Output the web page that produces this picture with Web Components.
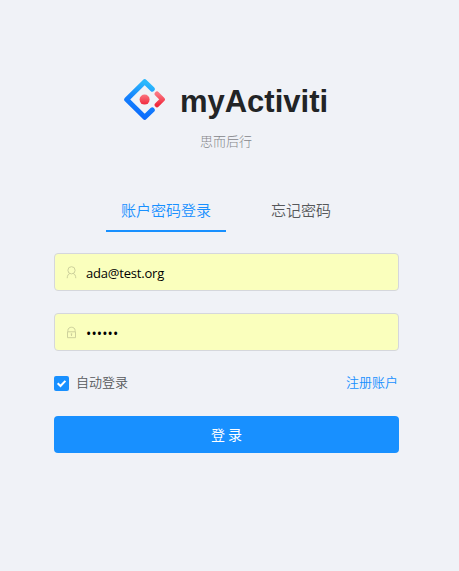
<!DOCTYPE html>
<html lang="zh-CN">
<head>
<meta charset="utf-8">
<title>myActiviti</title>
<style>
html, body { margin: 0; height: 100%; }
body { background: #f0f2f7; font-family: "Liberation Sans", "Noto Sans CJK SC", sans-serif; overflow: hidden; }
</style>
</head>
<body>
<login-page>
  <brand-header slot="header">myActiviti<span slot="desc">思而后行</span></brand-header>
  <login-tabs>
    <login-tab active>账户密码登录</login-tab>
    <login-tab>忘记密码</login-tab>
  </login-tabs>
  <login-field icon="user">ada@test.org</login-field>
  <login-field icon="lock">••••••</login-field>
  <login-options>自动登录<span slot="link">注册账户</span></login-options>
  <login-button>登 录</login-button>
</login-page>
<script>
function define(name, html, setup) {
  const template = document.createElement('template');
  template.innerHTML = html;
  customElements.define(name, class extends HTMLElement {
    constructor() {
      super();
      this.attachShadow({ mode: 'open' }).append(template.content.cloneNode(true));
    }
    connectedCallback() { if (setup) setup(this, this.shadowRoot); }
  });
}

define('login-page', `
<style>
:host { display: flex; flex-direction: column; align-items: center; box-sizing: border-box; min-height: 100%; padding: 79px 6px 0 0; }
main { width: 345px; display: flex; flex-direction: column; }
</style>
<slot name="header"></slot>
<main><slot></slot></main>`);

define('brand-header', `
<style>
:host { display: flex; flex-direction: column; align-items: center; width: 345px; color: #222426; }
.row { display: flex; align-items: center; gap: 15px; height: 41px; margin-right: 1px; }
svg { width: 41px; height: 41px; display: block; }
h1 { margin: 0; font-size: 31px; line-height: 41px; font-weight: 700; padding-top: 4px; white-space: nowrap; }
.desc { font-size: 13px; line-height: 20px; color: #85868a; margin: 12px 1px 0 0; font-weight: 300; }
</style>
<div class="row">
<svg viewBox="0 0 41 41">
  <defs>
    <linearGradient id="b" x1="0.6" y1="0" x2="0.35" y2="1"><stop offset="0" stop-color="#2bb8fc"/><stop offset="0.5" stop-color="#1683fd"/><stop offset="1" stop-color="#0a68fd"/></linearGradient>
    <linearGradient id="r" x1="0" y1="0" x2="0" y2="1"><stop offset="0" stop-color="#fa7580"/><stop offset="1" stop-color="#f1283c"/></linearGradient>
  </defs>
  <path d="M28.3 10.1 L20.7 2.7 L2.7 20.5 L20.7 38.3 L28.3 30.9" fill="none" stroke="url(#b)" stroke-width="5" stroke-linecap="round" stroke-linejoin="round"/>
  <path d="M33 14.9 L38.5 20.4 L33 25.9" fill="none" stroke="url(#r)" stroke-width="4.8" stroke-linecap="round" stroke-linejoin="round"/>
  <circle cx="20.6" cy="20.6" r="5" fill="url(#r)"/>
</svg>
<h1><slot></slot></h1>
</div>
<div class="desc"><slot name="desc"></slot></div>`);

define('login-tabs', `
<style>:host { display: flex; justify-content: center; gap: 30px; margin: 38px 1px 21px 0; height: 42px; }</style>
<slot></slot>`);

define('login-tab', `
<style>
:host { box-sizing: border-box; display: block; height: 42px; padding: 10px 15px 0; font-size: 15px; line-height: 22px; font-weight: 350; color: #56585b; white-space: nowrap; }
:host([active]) { color: #1890ff; border-bottom: 2px solid #1890ff; }
</style>
<slot></slot>`);

const icons = {
  user: '<circle cx="6.5" cy="4.3" r="3.6"/><path d="M2.2 12.2C2.2 9.4 3.6 7.8 5 7.4M8 7.4C9.5 7.8 10.8 9.4 10.8 12.2"/>',
  lock: '<path d="M2.9 5.8V4.4C2.9 .2 10.1 .2 10.1 4.4V5.8M2.5 5.8H10.5V11.7H2.5ZM6.5 7.5V10M5.7 8.1H7.3"/>'
};
define('login-field', `
<style>
:host { box-sizing: border-box; display: flex; align-items: center; height: 38px; margin-bottom: 22px; padding-left: 10px; border: 1px solid #d5d7dc; border-radius: 4px; background: #faffbd; color: #000; font: 13px/20px "Open Sans", "Noto Sans", sans-serif; }
svg { width: 13px; height: 13px; margin-right: 8px; fill: none; stroke: #cdd19c; stroke-width: 1; }
.value { padding-top: 2px; white-space: nowrap; letter-spacing: -0.2px; }
:host([icon="lock"]) .value { padding-top: 3px; font-size: 14px; letter-spacing: 0.12px; }
</style>
<svg viewBox="0 0 13 13"></svg><span class="value"><slot></slot></span>`,
  (host, root) => { root.querySelector('svg').innerHTML = icons[host.getAttribute('icon')]; });

define('login-options', `
<style>
:host { display: flex; align-items: center; height: 20px; margin: 0 1px 23px 0; font-size: 13px; line-height: 20px; color: #56585b; font-weight: 350; }
.box { width: 15px; height: 15px; border-radius: 2px; background: #1890ff; margin-right: 7px; }
svg { display: block; }
.link { margin-left: auto; color: #1890ff; }
</style>
<span class="box"><svg width="15" height="15" viewBox="0 0 15 15"><path d="M3.7 7.2L6.5 10L11.4 4.9" fill="none" stroke="#fff" stroke-width="2"/></svg></span>
<span><slot></slot></span><span class="link"><slot name="link"></slot></span>`);

define('login-button', `
<style>
:host { display: flex; align-items: center; justify-content: center; height: 37px; border-radius: 4px; background: #1890ff; color: #fff; font-size: 14px; line-height: 20px; }
span { word-spacing: -1px; }
</style>
<span><slot></slot></span>`);
</script>
</body>
</html>
